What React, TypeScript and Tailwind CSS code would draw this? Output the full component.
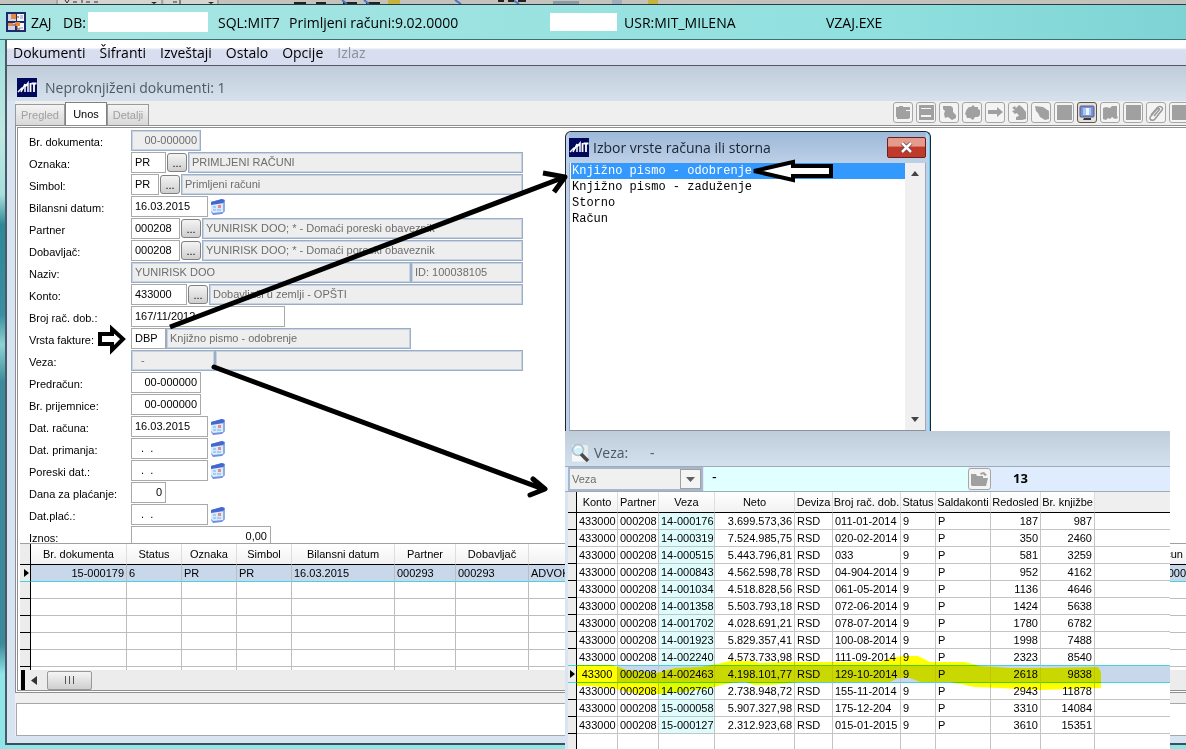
import { useState, type ReactNode } from "react";

const DATE_ROWS = ["Dat. računa:", "Dat. primanja:", "Poreski dat.:"];

const DOC_HEADERS = [
  "Br. dokumenta",
  "Status",
  "Oznaka",
  "Simbol",
  "Bilansni datum",
  "Partner",
  "Dobavljač",
];

const VEZA_ROWS = [
  ["433000", "000208", "14-000176", "3.699.573,36", "RSD", "011-01-2014", "9", "P", "187", "987"],
  ["433000", "000208", "14-000319", "7.524.985,75", "RSD", "020-02-2014", "9", "P", "350", "2460"],
  ["433000", "000208", "14-000515", "5.443.796,81", "RSD", "033", "9", "P", "581", "3259"],
  ["433000", "000208", "14-000843", "4.562.598,78", "RSD", "04-904-2014", "9", "P", "952", "4162"],
  ["433000", "000208", "14-001034", "4.518.828,56", "RSD", "061-05-2014", "9", "P", "1136", "4646"],
  ["433000", "000208", "14-001358", "5.503.793,18", "RSD", "072-06-2014", "9", "P", "1424", "5638"],
  ["433000", "000208", "14-001702", "4.028.691,21", "RSD", "078-07-2014", "9", "P", "1780", "6782"],
  ["433000", "000208", "14-001923", "5.829.357,41", "RSD", "100-08-2014", "9", "P", "1998", "7488"],
  ["433000", "000208", "14-002240", "4.573.733,98", "RSD", "111-09-2014", "9", "P", "2323", "8540"],
  ["43300", "000208", "14-002463", "4.198.101,77", "RSD", "129-10-2014", "9", "P", "2618", "9838"],
  ["433000", "000208", "14-002760", "2.738.948,72", "RSD", "155-11-2014", "9", "P", "2943", "11878"],
  ["433000", "000208", "15-000058", "5.907.327,98", "RSD", "175-12-204", "9", "P", "3310", "14084"],
  ["433000", "000208", "15-000127", "2.312.923,68", "RSD", "015-01-2015", "9", "P", "3610", "15351"],
];

const VEZA_HEADERS = [
  "Konto",
  "Partner",
  "Veza",
  "Neto",
  "Deviza",
  "Broj rač. dob.",
  "Status",
  "Saldakonti",
  "Redosled",
  "Br. knjižbe",
];

const SELECTED_VEZA = 9;
const RIGHT_COLUMNS = [3, 8, 9];

const INVOICE_KINDS = [
  "Knjižno pismo - odobrenje",
  "Knjižno pismo - zaduženje",
  "Storno",
  "Račun",
];

const TOOLS: { name: string; path: string }[] = [
  { name: "Otvori", path: "M0 2h3V1h4v1h7v3h-4v1h4v7l-2 1H1v-2H0z" },
  { name: "Snimi", path: "M0 0h15v15H0zM2 3v1h10V3zM2 10v2h10v-2z" },
  { name: "Kopiraj", path: "M1 1l8 0 2 2v4l3 3v3l-4 2-4-3-3 1-1-4 1-3-2-2z" },
  { name: "Podešavanja", path: "M4 2h2l2-2 2 2h3v2l2 1v5l-2 2-3 0-2 3-3-2H2l-1-3-1-1 1-3 1-2z" },
  { name: "Dalje", path: "M0 5h9V2l6 5-6 5V9H0z" },
  { name: "Vrati", path: "M1 3l3-2 1 2 3-3 3 2 4 5v7l-4 1H5v-3l3-1-2-3-2 1-3-3 3-1z" },
  { name: "Oznaka", path: "M1 1l8 1 6 4v8l-4 1-5-3-2-4-2-2z" },
  { name: "Lista", path: "M0 0h15v15H0z" },
  { name: "Ekran", path: "" },
  { name: "Mapa", path: "M0 3l3-1 4 1 2-2h5v10l1 2-3 1-3-2-2 2-2-1-2 2-3-1z" },
  { name: "Tabela", path: "M0 0h15v15H0z" },
  { name: "Prilog", path: "" },
  { name: "Izlaz", path: "M0 0h15v15H0z" },
];

function MitLogo() {
  return (
    <svg width="20" height="19" viewBox="0 0 20 19" className="shrink-0" aria-hidden="true">
      <rect width="20" height="19" fill="#00085c" />
      <path d="M1 14l4-4h2M4 14l4-8v8M8 9l3-4v9" stroke="#fff" strokeWidth="1.5" fill="none" />
      <path d="M13.500 5v9M17 6v8M14.500 5.500h5" stroke="#fff" strokeWidth="1.8" fill="none" />
    </svg>
  );
}

function AppIcon() {
  return (
    <svg width="20" height="20" viewBox="0 0 20 20" className="shrink-0" aria-hidden="true">
      <rect width="20" height="20" fill="#1d2a6b" />
      <path d="M11 2h7v7h-7zM11 11h7v7h-7z" fill="#f4f6fb" />
      <path d="M2 2h8v7H2zM2 11h7v7H2z" fill="#cdd6ea" />
      <path d="M5 2h5v5H5zM2 11h5v3H2zM9 10h5v4H9z" fill="#e58a3c" />
      <path d="M10 5h3M7 13h3M11 14v3h3" stroke="#7b3a14" fill="none" />
      <path d="M14 4h3M14 6h3M13 16h4" stroke="#8793b8" fill="none" />
    </svg>
  );
}

function CalendarButton({ label }: { label: string }) {
  return (
    <button type="button" aria-label={`Kalendar ${label}`} className="ml-0.5">
      <svg width="16" height="16" viewBox="0 0 16 16">
        <path d="M1 3l11-3 3 1v11l-3 3-9 1-2-3z" fill="#6f8fe0" />
        <path d="M1 5l12-2v10L3 14l-2-2z" fill="#d9ebff" />
        <path d="M1 3l11-3 2 1v3L1 6z" fill="#4468d0" />
        <path d="M13 4l2-2v10l-2 1z" fill="#8eaee9" />
        <path d="M3 8h3M3 11h3M7 11h4" stroke="#a7cdf6" strokeWidth="2" />
        <path d="M8 6h3v3H8z" fill="#e88a80" />
      </svg>
    </button>
  );
}

function Row({ id, label, children }: { id: string; label: string; children: ReactNode }) {
  return (
    <div className="flex h-[22px] shrink-0 items-start">
      <label htmlFor={id} className="w-[102px] shrink-0 pt-1 leading-4">
        {label}
      </label>
      <div className="flex w-[392px] items-center">{children}</div>
    </div>
  );
}

function Field({
  id,
  value,
  className = "",
  label,
}: {
  id?: string;
  value: string;
  className?: string;
  label?: string;
}) {
  return (
    <input
      id={id}
      aria-label={label}
      defaultValue={value}
      className={`h-[21px] border border-[#a9a9a9] bg-white px-[3px] pb-0.5 ${className}`}
    />
  );
}

function LockedField({
  id,
  value,
  className = "",
  label,
}: {
  id?: string;
  value: string;
  className?: string;
  label?: string;
}) {
  return (
    <input
      id={id}
      aria-label={label}
      value={value}
      readOnly
      className={`h-[21px] min-w-0 border border-[#9dadc3] bg-[#eeeeee] px-[3px] pb-0.5 text-[#6d6d6d] shadow-[inset_0_0_0_1px_#c6d3e4] ${className}`}
    />
  );
}

function DotsButton({ label }: { label: string }) {
  return (
    <button
      type="button"
      aria-label={label}
      className="mx-px h-[19px] w-5 shrink-0 rounded-[3px] border border-[#808080] bg-linear-to-b from-[#f4f4f4] to-[#cfcfcf] leading-4"
    >
      ...
    </button>
  );
}

function ToolIcon({ name, path }: { name: string; path: string }) {
  if (name === "Ekran") {
    return (
      <svg width="16" height="16" viewBox="0 0 16 16">
        <rect x="1" y="1" width="14" height="11" rx="1" fill="#7d92cf" stroke="#4d5a8c" />
        <rect x="4" y="3" width="8" height="7" fill="#a9c4f5" />
        <rect x="7" y="3" width="3" height="7" fill="#eef5ff" />
        <path d="M5 13h7v2H4z" fill="#33363c" />
      </svg>
    );
  }
  if (name === "Prilog") {
    return (
      <svg width="16" height="16" viewBox="0 0 16 16">
        <path
          d="M3 10l6-7c2-3 7-1 5 2l-7 9c-3 3-7 0-4-3l6-7c2-1 3 0 2 1l-5 6"
          fill="none"
          stroke="#9b9b9b"
          strokeWidth="1.6"
        />
      </svg>
    );
  }
  return (
    <svg width="15" height="15" viewBox="0 0 15 15">
      <path d={path} fill="#a0a0a0" fillRule="evenodd" />
    </svg>
  );
}

function Toolbar() {
  return (
    <div className="flex gap-[3px] pt-px">
      {TOOLS.map((tool) => (
        <button
          key={tool.name}
          type="button"
          aria-label={tool.name}
          className={
            tool.name === "Ekran"
              ? "flex h-[21px] w-5 shrink-0 items-center justify-center rounded-[3px] border border-[#5f5650] bg-[#e4e0da]"
              : "flex h-[21px] w-5 shrink-0 items-center justify-center rounded-[3px] border border-[#a6a6a6] bg-[#f4f4f4]"
          }
        >
          <ToolIcon {...tool} />
        </button>
      ))}
    </div>
  );
}

/* Slice of the editor window that shows behind the application */
function BackgroundStrip() {
  return (
    <div className="relative h-[5px] shrink-0 overflow-hidden border-b border-[#2d3b40] bg-[#c4c2bd]">
      <svg width="800" height="4" viewBox="0 0 800 4" aria-hidden="true">
        <path d="M57 0v4M162 0v4M218 0v4" stroke="#8a8a8a" />
        <path d="M58 0h103v4H58zM164 0h53v4h-53z" fill="#d6d4d0" />
        <path d="M65 0l2 3 2-3M73 2h4M82 0v3M86 2h4M94 2h4M173 2h4M180 0v4" stroke="#333" fill="none" />
        <path d="M151 2h6l-3 2zM208 2h6l-3 2z" fill="#222" />
        <path d="M294 3h12M316 3h10M343 3h14M366 3h14" stroke="#222" strokeWidth="2" />
        <path d="M342 0l5 4M364 0l5 4M455 0l6 4M513 0l6 4" stroke="#4a76c4" strokeWidth="2" />
        <path d="M388 0h12v4h-12zM648 0h10v4h-10z" fill="#c5b33c" />
        <path d="M498 1h6M508 1h6M518 1h8" stroke="#222" strokeWidth="2" />
        <path d="M553 1h26v3h-26z" fill="#8d9aa5" />
        <path d="M612 1h10M612 3h10" stroke="#7f95b8" />
      </svg>
    </div>
  );
}

function DocumentForm() {
  return (
    <form className="flex min-h-0 flex-1 flex-col overflow-hidden pt-0.5 pl-[11px]">
      <Row id="brdok" label="Br. dokumenta:">
        <LockedField id="brdok" value="00-000000" className="w-[70px] text-right" />
      </Row>
      <Row id="oznaka" label="Oznaka:">
        <Field id="oznaka" value="PR" className="w-[35px]" />
        <DotsButton label="Izbor oznake" />
        <LockedField label="Naziv oznake" value="PRIMLJENI RAČUNI" className="flex-1" />
      </Row>
      <Row id="simbol" label="Simbol:">
        <Field id="simbol" value="PR" className="w-7" />
        <DotsButton label="Izbor simbola" />
        <LockedField label="Naziv simbola" value="Primljeni računi" className="flex-1" />
      </Row>
      <Row id="bilansni" label="Bilansni datum:">
        <Field id="bilansni" value="16.03.2015" className="w-[77px]" />
        <CalendarButton label="bilansni datum" />
      </Row>
      <Row id="partner" label="Partner">
        <Field id="partner" value="000208" className="w-[49px]" />
        <DotsButton label="Izbor partnera" />
        <LockedField
          label="Naziv partnera"
          value="YUNIRISK DOO; * - Domaći poreski obaveznik"
          className="flex-1"
        />
      </Row>
      <Row id="dobavljac" label="Dobavljač:">
        <Field id="dobavljac" value="000208" className="w-[49px]" />
        <DotsButton label="Izbor dobavljača" />
        <LockedField
          label="Naziv dobavljača"
          value="YUNIRISK DOO; * - Domaći poreski obaveznik"
          className="flex-1"
        />
      </Row>
      <Row id="naziv" label="Naziv:">
        <LockedField id="naziv" value="YUNIRISK DOO" className="w-[280px]" />
        <LockedField label="ID" value="ID: 100038105" className="flex-1" />
      </Row>
      <Row id="konto" label="Konto:">
        <Field id="konto" value="433000" className="w-14" />
        <DotsButton label="Izbor konta" />
        <LockedField label="Naziv konta" value="Dobavljači u zemlji - OPŠTI" className="flex-1" />
      </Row>
      <Row id="broj" label="Broj rač. dob.:">
        <Field id="broj" value="167/11/2012" className="w-[154px]" />
      </Row>
      <Row id="vrsta" label="Vrsta fakture:">
        <Field id="vrsta" value="DBP" className="w-[35px]" />
        <LockedField label="Naziv vrste" value="Knjižno pismo - odobrenje" className="w-[245px]" />
      </Row>
      <Row id="veza" label="Veza:">
        <LockedField id="veza" value="  -" className="w-[84px] whitespace-pre" />
        <LockedField label="Opis veze" value="" className="flex-1" />
      </Row>
      <Row id="predracun" label="Predračun:">
        <Field id="predracun" value="00-000000" className="w-[70px] text-right" />
      </Row>
      <Row id="prijemnica" label="Br. prijemnice:">
        <Field id="prijemnica" value="00-000000" className="w-[70px] text-right" />
      </Row>
      {DATE_ROWS.map((label, i) => (
        <Row key={label} id={`datum-${i}`} label={label}>
          <Field id={`datum-${i}`} value={i === 0 ? "16.03.2015" : "  .  ."} className="w-[77px]" />
          <CalendarButton label={label} />
        </Row>
      ))}
      <Row id="dana" label="Dana za plaćanje:">
        <Field id="dana" value="0" className="w-[35px] text-right" />
      </Row>
      <Row id="datplac" label="Dat.plać.:">
        <Field id="datplac" value="  .  ." className="w-[77px]" />
        <CalendarButton label="Dat.plać." />
      </Row>
      <Row id="iznos" label="Iznos:">
        <Field id="iznos" value="0,00" className="w-[140px] text-right" />
      </Row>
    </form>
  );
}

function DocumentTable() {
  const marker = "border-r border-b border-black bg-[#ececec]";
  const cell = "overflow-hidden border-r border-b border-[#bdbdbd] px-0.5";
  return (
    <div className="h-[127px] shrink-0 overflow-hidden border-t border-[#a0a0a0]">
      <table className="w-full table-fixed border-separate border-spacing-0 leading-4 whitespace-nowrap">
        <colgroup>
          <col className="w-[11px]" />
          <col className="w-24" />
          <col className="w-[55px]" />
          <col className="w-[55px]" />
          <col className="w-[55px]" />
          <col className="w-[103px]" />
          <col className="w-[61px]" />
          <col className="w-[73px]" />
          <col />
          <col className="w-[38px]" />
        </colgroup>
        <thead>
          <tr className="h-[21px] bg-linear-to-b from-white to-[#f1f1f2]">
            <th className="border-r border-b border-black bg-[#ececec]" />
            {DOC_HEADERS.map((header) => (
              <th key={header} className="border-r border-b border-r-[#dedede] border-b-black p-0 font-normal">
                {header}
              </th>
            ))}
            <th className="border-b border-black" />
            <th className="border-b border-black p-0 text-center font-normal">Račun</th>
          </tr>
        </thead>
        <tbody>
          <tr className="h-[17px] bg-[#c8d8ea] [&>td]:border-b-[#45d3df]">
            <td className={marker}>
              <svg width="5" height="8" viewBox="0 0 5 8" className="ml-1">
                <path d="M0 0l5 4-5 4z" />
              </svg>
            </td>
            <td className={`${cell} text-right`}>15-000179</td>
            <td className={cell}>6</td>
            <td className={cell}>PR</td>
            <td className={cell}>PR</td>
            <td className={cell}>16.03.2015</td>
            <td className={cell}>000293</td>
            <td className={cell}>000293</td>
            <td className={cell}>ADVOK</td>
            <td className="border-b p-0 text-right">000</td>
          </tr>
          {[1, 2, 3, 4, 5, 6].map((row) => (
            <tr key={row} className="h-[17px]">
              <td className={marker} />
              {[0, 1, 2, 3, 4, 5, 6, 7].map((col) => (
                <td key={col} className={cell} />
              ))}
              <td className="border-b border-[#bdbdbd]" />
            </tr>
          ))}
        </tbody>
      </table>
    </div>
  );
}

function KindDialog() {
  const [selected, setSelected] = useState(INVOICE_KINDS[0]);
  return (
    <section
      aria-label="Izbor vrste računa ili storna"
      className="absolute top-[131px] left-[565px] flex h-[300px] w-[366px] flex-col rounded-t-md border border-b-0 border-[#1b2733] bg-[#bdd0e8] pr-1 pl-[3px] shadow-[inset_-1px_0_0_#62c8ee]"
    >
      <header className="flex h-[31px] shrink-0 items-center gap-1 bg-linear-to-b from-[#9db8d8] to-[#bdd0e8]">
        <MitLogo />
        <h2 className="flex-1 font-['Open_Sans',sans-serif] text-[14px] text-[#1a2530]">
          Izbor vrste računa ili storna
        </h2>
        <button
          type="button"
          aria-label="Zatvori"
          className="flex h-[21px] w-[39px] items-center justify-center rounded-xs border border-[#6b2020] bg-linear-to-b from-[#e59a8c] from-40% to-[#c03a2b] to-50%"
        >
          <svg width="13" height="11" viewBox="0 0 13 11">
            <path d="M2 1l9 9M11 1l-9 9" stroke="#6a3a3a" strokeWidth="4" />
            <path d="M2 1l9 9M11 1l-9 9" stroke="#fff" strokeWidth="2.5" />
          </svg>
        </button>
      </header>
      <div className="flex min-h-0 flex-1 border border-t-0 border-b-[#8c9299] border-[#9aa9bd] bg-white">
        <div className="flex-1 pl-px">
          {INVOICE_KINDS.map((kind) => (
            <button
              key={kind}
              type="button"
              onClick={() => setSelected(kind)}
              className={
                kind === selected
                  ? "block h-4 w-full bg-[#3399ff] pl-px text-left font-['Liberation_Mono',monospace] text-[12px] leading-4 text-white"
                  : "block h-4 w-full pl-px text-left font-['Liberation_Mono',monospace] text-[12px] leading-4"
              }
            >
              {kind}
            </button>
          ))}
        </div>
        <div className="flex w-5 flex-col items-center justify-between bg-[#f0f0f0] py-2">
          <svg width="8" height="5" viewBox="0 0 8 5" aria-hidden="true">
            <path d="M0 5l4-5 4 5z" fill="#444" />
          </svg>
          <svg width="8" height="5" viewBox="0 0 8 5" aria-hidden="true">
            <path d="M0 0l4 5 4-5z" fill="#444" />
          </svg>
        </div>
      </div>
    </section>
  );
}

function VezaTable() {
  return (
    <table className="w-full table-fixed border-separate border-spacing-0 leading-4 whitespace-nowrap">
      <colgroup>
        <col className="w-[9px]" />
        <col className="w-[41px]" />
        <col className="w-[41px]" />
        <col className="w-14" />
        <col className="w-20" />
        <col className="w-[38px]" />
        <col className="w-[68px]" />
        <col className="w-[35px]" />
        <col className="w-[55px]" />
        <col className="w-[50px]" />
        <col className="w-[54px]" />
        <col />
      </colgroup>
      <thead>
        <tr className="h-[21px] bg-linear-to-b from-white to-[#f1f1f2]">
          <th className="border-r border-b border-black bg-[#ececec]" />
          {VEZA_HEADERS.map((header) => (
            <th key={header} className="border-r border-b border-r-[#dedede] border-b-black p-0 font-normal">
              {header}
            </th>
          ))}
          <th className="border-b border-black bg-[#efefef]" />
        </tr>
      </thead>
      <tbody>
        {VEZA_ROWS.map((row, r) => (
          <tr
            key={row[2]}
            className={
              r === SELECTED_VEZA
                ? "h-[17px] bg-[#c8d8ea] [&>td]:border-b-[#45d3df]"
                : r === SELECTED_VEZA - 1
                  ? "h-[17px] [&>td]:border-b-[#45d3df]"
                  : "h-[17px]"
            }
          >
            <td className="border-r border-b border-black bg-[#ececec]">
              {r === SELECTED_VEZA && (
                <svg width="5" height="8" viewBox="0 0 5 8" className="ml-0.5">
                  <path d="M0 0l5 4-5 4z" />
                </svg>
              )}
            </td>
            {row.map((value, c) => (
              <td
                key={c}
                className={[
                  "border-r border-b border-[#c4c4c4] pr-0.5",
                  RIGHT_COLUMNS.includes(c) ? "text-right" : "pl-0.5",
                  c === 2 && r !== SELECTED_VEZA ? "bg-[#dffcfd]" : "",
                  c === 0 && r === SELECTED_VEZA ? "bg-white text-center" : "",
                ].join(" ")}
              >
                {value}
              </td>
            ))}
            <td className="border-b border-[#c4c4c4]" />
          </tr>
        ))}
        <tr className="h-[17px]">
          <td className="border-r border-black bg-[#ececec]" />
          {VEZA_HEADERS.map((header) => (
            <td key={header} className="border-r border-[#c4c4c4]" />
          ))}
          <td />
        </tr>
      </tbody>
    </table>
  );
}

function VezaWindow() {
  return (
    <section
      aria-label="Veza"
      className="absolute top-[431px] left-[565px] flex h-[318px] w-[605px] flex-col overflow-hidden bg-[#d8e4f1]"
    >
      <header className="flex h-[35px] shrink-0 items-center gap-1 bg-linear-to-b from-[#bfccda] to-[#d3e0ed] pt-2 pl-[5px] font-['Open_Sans',sans-serif] text-[14px] text-[#4b5966]">
        <svg width="20" height="20" viewBox="0 0 20 20" aria-hidden="true">
          <path d="M2 2h15l1 2v15H2z" fill="#e9ecee" />
          <path d="M2 11h10v7H2z" fill="#f7f8f8" />
          <circle cx="8" cy="7" r="5.500" fill="#d3eef5" stroke="#a9c3cd" strokeWidth="1.5" />
          <path d="M5 6c1-2 4-3 6-1" stroke="#fff" strokeWidth="1.5" fill="none" />
          <path d="M11 11l7 7" stroke="#4b4b4b" strokeWidth="3.5" />
        </svg>
        <h2 className="w-[52px]">Veza:</h2>
        <span>-</span>
      </header>
      <div className="flex h-[26px] shrink-0 items-center border-y border-[#a0abb8] bg-[#dfecfd] pl-[3px]">
        <div className="relative">
          <select
            aria-label="Polje pretrage"
            className="block h-6 w-[135px] appearance-none border-2 border-[#a8b8cc] bg-[#f0f0f0] px-0.5 text-[#6d6d6d]"
          >
            <option>Veza</option>
          </select>
          <span className="pointer-events-none absolute top-0.5 right-0.5 flex h-5 w-[21px] items-center justify-center border border-[#a0a0a0] bg-[#f4f4f4]">
            <svg width="9" height="5" viewBox="0 0 9 5">
              <path d="M0 0h9L4.500 5z" fill="#606060" />
            </svg>
          </span>
        </div>
        <input
          aria-label="Vrednost pretrage"
          defaultValue="-"
          className="ml-px h-6 w-[264px] bg-[#e0ffff] px-2 pb-1 text-[14px]"
        />
        <button
          type="button"
          aria-label="Otvori"
          className="flex h-[22px] w-[23px] items-center justify-center rounded-[3px] border border-[#a6a6a6] bg-[#f4f4f4]"
        >
          <svg width="17" height="15" viewBox="0 0 17 15">
            <path d="M0 2h5l1 2h6v2h5l-2 8H1L0 13zM9 1l4-1 3 3-2 1-2-2-2 1z" fill="#a0a0a0" />
          </svg>
        </button>
        <output className="ml-[22px] font-['Noto_Sans',sans-serif] text-[13px] font-bold">13</output>
      </div>
      <div className="ml-[3px] bg-white">
        <VezaTable />
      </div>
    </section>
  );
}

/* Marker strokes and arrows drawn over the windows */
function Annotations() {
  return (
    <>
      <svg
        width="1186"
        height="749"
        viewBox="0 0 1186 749"
        className="pointer-events-none absolute top-0 left-0 mix-blend-multiply"
        aria-hidden="true"
      >
        <path
          d="M577 665L612 665 627 670 657 673 675 668 700 667 717 664 730 661 752 661 760 663 780 662 880 662 890 658 903 656 918 656 930 662 965 662 980 666 1010 668 1043 668 1098 667 1101 672 1101 688 1040 690 1000 688 975 687 950 682 920 682 910 678 898 678 890 682 800 682 770 685 755 685 745 682 730 683 710 688 690 691 660 694 640 694 615 689 590 686 577 686z"
          fill="#ffff00"
        />
      </svg>
      <svg
        width="1186"
        height="749"
        viewBox="0 0 1186 749"
        className="pointer-events-none absolute top-0 left-0"
        fill="none"
        stroke="#000"
        aria-hidden="true"
      >
        <g strokeWidth="5" strokeLinejoin="round">
          <path d="M170 327L562 178M543 173L565 177 554 192" />
          <path d="M214 367L543 489M533 479L545 489 530 495" strokeLinecap="round" />
        </g>
        <path d="M100 334h12v-5l11 10-11 11v-6h-12z" fill="#fff" strokeWidth="4" />
        <path d="M754 171L793 162v4h38v10h-38v4z" fill="#fff" strokeWidth="4" />
      </svg>
    </>
  );
}

export default function App() {
  return (
    <div className="relative flex h-screen flex-col overflow-hidden bg-[linear-gradient(#8fdedd_0%,#bfe8e2_18%,#a5dfdc_26%,#2f8797_30%,#3a8fa0_42%,#8cd2d2_46%,#3c8a9b_51%,#3c8a9b_86%,#8fe6e6_90%)] font-['Liberation_Sans',sans-serif] text-[11px] text-black">
      <BackgroundStrip />

      {/* Title bar */}
      <header className="flex h-[35px] shrink-0 items-center border-b border-[#3d6f73] bg-linear-to-r from-[#a9e6e3] via-[#8fe0df] via-75% to-[#7fd3d4] pl-1.5 font-['Open_Sans',sans-serif] text-[14px] whitespace-nowrap">
        <AppIcon />
        <h1 className="ml-[5px] w-8">ZAJ</h1>
        <span className="w-[25px]">DB:</span>
        <span className="h-5 w-[120px] bg-white" />
        <span className="ml-2.5 w-[71px]">SQL:MIT7</span>
        <span className="w-[261px]">Primljeni računi:9.02.0000</span>
        <span className="h-[18px] w-[67px] bg-white" />
        <span className="ml-[7px] w-[202px]">USR:MIT_MILENA</span>
        <span>VZAJ.EXE</span>
      </header>

      <div className="ml-[5px] flex min-h-0 flex-1 flex-col border-l-2 border-[#4a5b66] bg-[#d8e4f1]">
        <nav className="flex h-[26px] shrink-0 items-center gap-3.5 border-b border-[#55585f] bg-linear-to-b from-white from-30% to-[#d8def0] to-40% pl-1.5 font-['Open_Sans',sans-serif] text-[14px]">
          <button type="button">Dokumenti</button>
          <button type="button">Šifranti</button>
          <button type="button">Izveštaji</button>
          <button type="button">Ostalo</button>
          <button type="button">Opcije</button>
          <button type="button" disabled className="text-[#8d8f98]">
            Izlaz
          </button>
        </nav>

        <div className="flex h-[35px] shrink-0 items-center gap-2 bg-linear-to-b from-[#c0ccd9] to-[#d5e2ee] pt-2 pl-2.5">
          <MitLogo />
          <h2 className="font-['Open_Sans',sans-serif] text-[14px] text-[#4b5966]">
            Neproknjiženi dokumenti: 1
          </h2>
        </div>

        <main className="ml-2 flex min-h-0 flex-1 flex-col bg-[#efefef]">
          <div className="flex h-6 shrink-0 items-end justify-between overflow-hidden">
            <div role="tablist" className="flex items-end">
              <button
                type="button"
                role="tab"
                className="h-[21px] w-[50px] border border-b-0 border-[#9a9a9a] bg-linear-to-b from-[#f4f4f4] to-[#d8d8d8] text-[#a0a0a0]"
              >
                Pregled
              </button>
              <button
                type="button"
                role="tab"
                aria-selected="true"
                className="h-[23px] w-[42px] border border-b-0 border-[#808080] bg-white"
              >
                Unos
              </button>
              <button
                type="button"
                role="tab"
                className="h-[21px] w-[42px] border border-b-0 border-[#9a9a9a] bg-linear-to-b from-[#f4f4f4] to-[#d8d8d8] text-[#a0a0a0]"
              >
                Detalji
              </button>
            </div>
            <div className="w-[293px] shrink-0 self-start overflow-hidden">
              <Toolbar />
            </div>
          </div>

          <div className="flex min-h-0 flex-1 flex-col border-3 border-r-0 border-double border-[#8f8f8f] bg-white">
            <DocumentForm />
            <div className="pl-0.5">
              <DocumentTable />
              <div className="flex h-5 items-center bg-[#ececec]">
                <span className="ml-px h-5 w-1 bg-black" />
                <svg width="6" height="9" viewBox="0 0 6 9" className="ml-1.5" aria-hidden="true">
                  <path d="M6 0v9L0 4.500z" fill="#333" />
                </svg>
                <span className="ml-2.5 flex h-[19px] w-[45px] items-center justify-center gap-[3px] rounded-xs border border-[#999] bg-linear-to-b from-[#f5f5f5] to-[#cfcfcf]">
                  <i className="h-2 w-px bg-[#555]" />
                  <i className="h-2 w-px bg-[#555]" />
                  <i className="h-2 w-px bg-[#555]" />
                </span>
              </div>
            </div>
          </div>

          <div className="mt-2.5 ml-px h-[33px] shrink-0 border border-r-0 border-[#a8a8a8] bg-white" />
        </main>
        <div className="h-[9px] shrink-0 border-b-2 border-[#3e4f5a]" />
      </div>
      <div className="h-1 shrink-0 bg-[#8fe6e6]" />

      <KindDialog />
      <VezaWindow />
      <Annotations />
    </div>
  );
}
